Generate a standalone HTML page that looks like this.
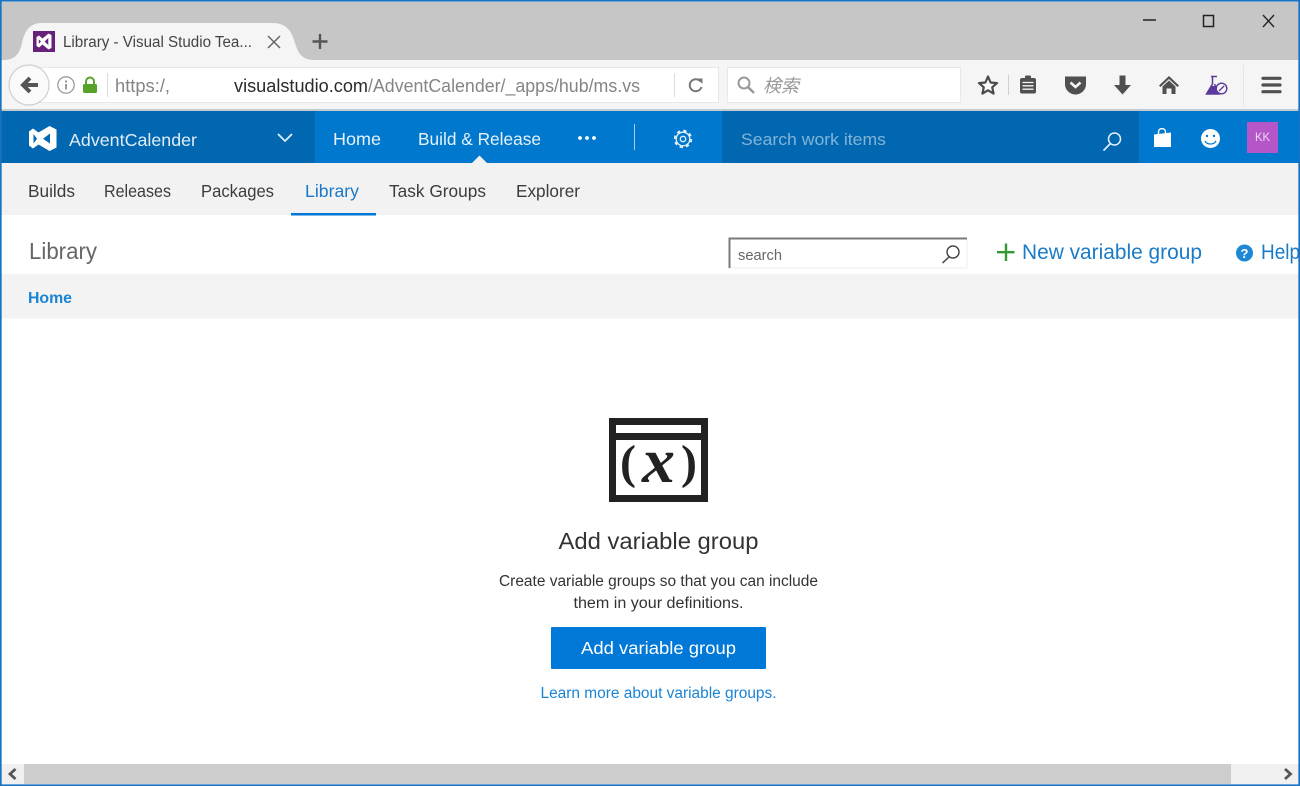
<!DOCTYPE html>
<html lang="en"><head><meta charset="utf-8"><title>Library - Visual Studio Team Services</title>
<style>
html,body{margin:0;padding:0;background:#fff;width:1300px;height:786px;overflow:hidden}
svg{display:block;position:absolute;left:0;top:0;filter:blur(.35px)}
text{font-family:"Liberation Sans","Noto Sans CJK JP",sans-serif}
</style></head><body>
<svg width="1300" height="786" viewBox="0 0 1300 786" xmlns="http://www.w3.org/2000/svg">
<rect width="1300" height="786" fill="#fff"/>
<!-- browser chrome -->
<rect x="1" y="2" width="1298" height="58" fill="#c6c6c6"/>
<rect x="1" y="60" width="1298" height="50" fill="#f5f5f5"/>
<rect x="1" y="109" width="1298" height="2" fill="#c3ccd3"/>
<path d="M4 60C16 60 20 52 22 43C25 29 31 23 42 23L272 23C285 23 291 29 295 43C298 53 302 60 314 60Z" fill="#f5f5f5"/>
<rect x="33" y="31" width="22" height="21" fill="#68217a"/>
<path d="M36.500 37L39 35.500L42.500 38.500L48.500 33.500L51.500 35V48L48.500 49.500L42.500 44.500L39 47.500L36.500 46ZM38.800 39.300V43.700L41 41.500ZM48.300 38L44.600 41.500L48.300 45Z" fill="#fff" fill-rule="evenodd"/>
<text x="63" y="47" font-size="15.500" fill="#444" textLength="189" lengthAdjust="spacingAndGlyphs">Library - Visual Studio Tea...</text>
<path d="M268 36L280 48M280 36L268 48" stroke="#666" stroke-width="1.500" fill="none"/>
<path d="M320 34V49M312.500 41.500H327.500" stroke="#555" stroke-width="2.400" fill="none"/>
<path d="M1143 20H1156" stroke="#222" stroke-width="1.500"/>
<rect x="1203.500" y="15.500" width="10" height="11" fill="none" stroke="#222" stroke-width="1.500"/>
<path d="M1263 15L1274 27M1274 15L1263 27" stroke="#222" stroke-width="1.400" fill="none"/>
<!-- url bar -->
<rect x="26.500" y="67.500" width="692" height="35" fill="#fff" stroke="#e8e8e8"/>
<circle cx="29" cy="85" r="20" fill="#fafafa" stroke="#d0d0d0" stroke-width="1.200"/>
<path d="M38 85H25M30 78L23 85L30 92" fill="none" stroke="#555" stroke-width="4"/>
<circle cx="66" cy="85" r="8.200" fill="none" stroke="#999" stroke-width="1.300"/>
<rect x="65" y="84" width="2" height="5.500" fill="#999"/><rect x="65" y="80.500" width="2" height="2" fill="#999"/>
<rect x="83" y="84" width="14" height="9" rx="1.500" fill="#57a32a"/>
<path d="M86 85V81.500A4 4 0 0 1 94 81.500V85" fill="none" stroke="#57a32a" stroke-width="2"/>
<rect x="107" y="73" width="1" height="24" fill="#dcdcdc"/>
<text x="115" y="92" font-size="18" fill="#858585" textLength="55" lengthAdjust="spacingAndGlyphs">https:/,</text>
<text x="234" y="92" font-size="18" fill="#2a2a2a" textLength="134" lengthAdjust="spacingAndGlyphs">visualstudio.com</text>
<text x="368" y="92" font-size="18" fill="#858585" textLength="272" lengthAdjust="spacingAndGlyphs">/AdventCalender/_apps/hub/ms.vs</text>
<rect x="674" y="73" width="1" height="24" fill="#dcdcdc"/>
<path d="M700.500 81.500A6 6 0 1 0 701.500 87" fill="none" stroke="#777" stroke-width="2"/>
<path d="M697 78.500H702.500V84Z" fill="#777"/>
<!-- search -->
<rect x="727.500" y="67.500" width="233" height="35" fill="#fff" stroke="#e8e8e8"/>
<circle cx="744" cy="83" r="5.500" fill="none" stroke="#999" stroke-width="2"/>
<path d="M748 87L754 93" stroke="#999" stroke-width="2.500"/>
<text x="763" y="92" font-size="18" font-style="italic" fill="#999" style="font-family:'Noto Sans CJK JP',sans-serif">検索</text>
<!-- toolbar icons -->
<path d="M988 76.500L990.600 82.500L997 83.100L992.200 87.300L993.600 93.600L988 90.300L982.400 93.600L983.800 87.300L979 83.100L985.400 82.500Z" fill="#fafafa" stroke="#4a4a4a" stroke-width="2.200" stroke-linejoin="round"/>
<rect x="1008" y="75" width="1" height="20" fill="#d0d0d0"/>
<rect x="1020" y="78" width="16" height="15.500" rx="2" fill="#505050"/>
<rect x="1025" y="75.500" width="6" height="4" rx="1" fill="#505050"/>
<path d="M1022.500 82.500H1033.500M1022.500 85.800H1033.500M1022.500 89.200H1033.500" stroke="#f5f5f5" stroke-width="1.300"/>
<path d="M1065 76.500H1086V84C1086 90 1081 94.500 1075.500 94.500C1070 94.500 1065 90 1065 84Z" fill="#505050"/>
<path d="M1070.500 82.500L1075.500 87L1080.500 82.500" fill="none" stroke="#f5f5f5" stroke-width="2.600"/>
<path d="M1119.500 75.500H1125.500V85H1131L1122.500 94.500L1114 85H1119.500Z" fill="#505050"/>
<path d="M1169 76L1179 85.500L1177.500 87L1169 79L1160.500 87L1159 85.500Z" fill="#505050"/>
<path d="M1169 80.500L1175.500 86.500V94H1171.500V88.500H1166.500V94H1162.500V86.500Z" fill="#505050"/>
<path d="M1211 76.500H1217M1212.500 77V84L1206.500 94H1219L1214.500 84" fill="none" stroke="#5b3a9e" stroke-width="1.500"/>
<path d="M1211 86H1215.500L1219 93.800H1206.500Z" fill="#5b3a9e"/>
<circle cx="1221.500" cy="88.500" r="5.300" fill="#f5f5f5" stroke="#5b3a9e" stroke-width="1.400"/>
<path d="M1219 91L1224 86" stroke="#5b3a9e" stroke-width="1.300"/>
<rect x="1243" y="65" width="1" height="42" fill="#e6e6e6"/>
<path d="M1263 78.300H1280M1263 85H1280M1263 91.700H1280" stroke="#505050" stroke-width="3.200" stroke-linecap="round"/>
<!-- nav bar -->
<rect x="1" y="111" width="1298" height="52" fill="#0078cd"/>
<rect x="1" y="111" width="314" height="52" fill="#0067b0"/>
<rect x="722" y="111" width="417" height="52" fill="#0067b0"/>
<path d="M29 131.500L33 128.500L38.500 132.500L49.500 126L56.500 129.500V147.500L49.500 151L38.500 144.500L33 148.500L29 145.500ZM33.500 134V143.500L37 138.700ZM50 133.500L43 138.700L50 143.500Z" fill="#fff" fill-rule="evenodd"/>
<text x="69" y="146" font-size="17.500" fill="#fff" fill-opacity=".88" textLength="128" lengthAdjust="spacingAndGlyphs">AdventCalender</text>
<path d="M278 134L285 141L292 134" fill="none" stroke="#dfeefa" stroke-width="1.800"/>
<text x="333" y="145" font-size="17.500" fill="#fff" fill-opacity=".9" textLength="48" lengthAdjust="spacingAndGlyphs">Home</text>
<text x="418" y="145" font-size="17.500" fill="#fff" fill-opacity=".9" textLength="123" lengthAdjust="spacingAndGlyphs">Build &amp; Release</text>
<path d="M472 163L479.500 155.500L487 163Z" fill="#f2f2f2"/>
<circle cx="580" cy="138" r="1.900" fill="#fff"/><circle cx="587" cy="138" r="1.900" fill="#fff"/><circle cx="594" cy="138" r="1.900" fill="#fff"/>
<rect x="634" y="124" width="1" height="26" fill="#a8d0ee"/>
<circle cx="683" cy="139" r="8.300" fill="none" stroke="#e6f2fb" stroke-width="1.800" stroke-dasharray="3.300 3.220"/>
<circle cx="683" cy="139" r="6.800" fill="none" stroke="#e6f2fb" stroke-width="1.300"/>
<circle cx="683" cy="139" r="2.700" fill="none" stroke="#e6f2fb" stroke-width="1.300"/>
<text x="741" y="145" font-size="17" fill="#fff" fill-opacity=".5" textLength="145" lengthAdjust="spacingAndGlyphs">Search work items</text>
<circle cx="1114.500" cy="139" r="6" fill="none" stroke="#e6f2fb" stroke-width="1.500"/>
<path d="M1110.500 143.500L1103.500 150.500" stroke="#e6f2fb" stroke-width="1.700"/>
<path d="M1154 134.500L1171 132.500V147H1154Z" fill="#fff"/>
<path d="M1158.500 134V132C1158.500 127.500 1165.500 127.500 1165.500 132V134" fill="none" stroke="#fff" stroke-width="1.400"/>
<circle cx="1210.500" cy="138.500" r="9.500" fill="#fff"/>
<circle cx="1207" cy="136" r="1.200" fill="#0078cd"/><circle cx="1214" cy="136" r="1.200" fill="#0078cd"/>
<path d="M1205 141C1207 145 1214 145 1216 141" fill="none" stroke="#0078cd" stroke-width="1.300"/>
<rect x="1247" y="122" width="31" height="31" fill="#b455c8"/>
<text x="1262.500" y="141" font-size="12" fill="#f0d9f5" text-anchor="middle" textLength="15" lengthAdjust="spacingAndGlyphs">KK</text>
<!-- sub nav -->
<rect x="1" y="163" width="1298" height="52" fill="#f2f2f2"/>
<g font-size="17.500" fill="#3c3c3c">
<text x="28" y="197" textLength="47" lengthAdjust="spacingAndGlyphs">Builds</text>
<text x="104" y="197" textLength="67" lengthAdjust="spacingAndGlyphs">Releases</text>
<text x="201" y="197" textLength="73" lengthAdjust="spacingAndGlyphs">Packages</text>
<text x="305" y="197" textLength="54" lengthAdjust="spacingAndGlyphs" fill="#1a78c8">Library</text>
<text x="389" y="197" textLength="97" lengthAdjust="spacingAndGlyphs">Task Groups</text>
<text x="516" y="197" textLength="64" lengthAdjust="spacingAndGlyphs">Explorer</text>
</g>
<rect x="291" y="213" width="85" height="2.500" fill="#0078d7"/>
<!-- header -->
<text x="29" y="259" font-size="23" fill="#666" textLength="68" lengthAdjust="spacingAndGlyphs">Library</text>
<rect x="729" y="238" width="239" height="31" fill="#f6f6f6"/>
<rect x="730" y="239" width="236" height="28" fill="#fff"/>
<path d="M729.500 268V238.500H967" fill="none" stroke="#7a7a7a" stroke-width="2"/>
<text x="738" y="260" font-size="15" fill="#666" textLength="44" lengthAdjust="spacingAndGlyphs">search</text>
<circle cx="953" cy="252" r="6" fill="none" stroke="#444" stroke-width="1.400"/>
<path d="M949 257L942.500 263" stroke="#555" stroke-width="1.600"/>
<path d="M1006 243.500V261M997 252.200H1014.500" stroke="#339933" stroke-width="2.400"/>
<text x="1022" y="259" font-size="21" fill="#1a7bc9" textLength="180" lengthAdjust="spacingAndGlyphs">New variable group</text>
<circle cx="1244.500" cy="253" r="8.500" fill="#1e88d6"/>
<text x="1244.500" y="258" font-size="13" font-weight="bold" fill="#fff" text-anchor="middle">?</text>
<text x="1261" y="259" font-size="21" fill="#1a7bc9" textLength="39" lengthAdjust="spacingAndGlyphs">Help</text>
<!-- breadcrumb -->
<rect x="1" y="274" width="1298" height="44.500" fill="#f3f3f3"/>
<text x="28" y="303" font-size="15.500" font-weight="bold" fill="#1b83d4" textLength="44" lengthAdjust="spacingAndGlyphs">Home</text>
<!-- empty state icon -->
<rect x="609" y="418" width="99" height="84" fill="#222"/>
<rect x="616" y="425" width="85" height="8" fill="#fff"/>
<rect x="616" y="440" width="85" height="55" fill="#fff"/>
<g fill="#222">
<text x="620" y="478" font-size="48" font-weight="bold" style="font-family:'Liberation Serif',serif">(</text>
<text x="642" y="482" font-size="64" font-weight="bold" font-style="italic" textLength="33" lengthAdjust="spacingAndGlyphs" style="font-family:'Liberation Serif',serif">x</text>
<text x="681" y="478" font-size="48" font-weight="bold" style="font-family:'Liberation Serif',serif">)</text>
</g>
<!-- empty state text -->
<text x="658.500" y="549" font-size="23" fill="#333" text-anchor="middle" textLength="200" lengthAdjust="spacingAndGlyphs">Add variable group</text>
<text x="658.500" y="586" font-size="15.500" fill="#333" text-anchor="middle" textLength="319" lengthAdjust="spacingAndGlyphs">Create variable groups so that you can include</text>
<text x="658.500" y="608" font-size="15.500" fill="#333" text-anchor="middle" textLength="170" lengthAdjust="spacingAndGlyphs">them in your definitions.</text>
<rect x="551" y="627" width="215" height="42" rx="1" fill="#0078d7"/>
<text x="658.500" y="654" font-size="17.500" fill="#fff" text-anchor="middle" textLength="155" lengthAdjust="spacingAndGlyphs">Add variable group</text>
<text x="658.500" y="698" font-size="15.500" fill="#1b83d4" text-anchor="middle" textLength="236" lengthAdjust="spacingAndGlyphs">Learn more about variable groups.</text>
<!-- scrollbar -->
<rect x="1" y="764" width="1298" height="20" fill="#f0f0f0"/>
<rect x="24" y="764" width="1207" height="20" fill="#cdcdcd"/>
<path d="M15.500 769L10 774L15.500 779" fill="none" stroke="#555" stroke-width="2.800"/>
<path d="M1285 769L1290.500 774L1285 779" fill="none" stroke="#555" stroke-width="2.800"/>
<!-- window frame -->
<rect x=".75" y=".75" width="1298.500" height="784.500" fill="none" stroke="#1a73c2" stroke-width="1.800"/>
</svg>
</body></html>
